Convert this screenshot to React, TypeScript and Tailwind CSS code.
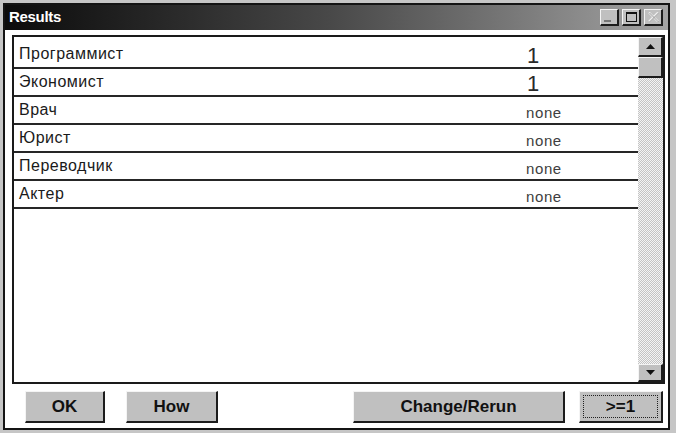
const ROWS = [
  { name: 'Программист', value: '1' },
  { name: 'Экономист', value: '1' },
  { name: 'Врач', value: 'none' },
  { name: 'Юрист', value: 'none' },
  { name: 'Переводчик', value: 'none' },
  { name: 'Актер', value: 'none' },
]

const bevel =
  'bg-[#c0c0c0] border-t border-l border-t-[#f4f4f4] border-l-[#f4f4f4] border-r-2 border-b-2 border-r-[#1c1c1c] border-b-[#1c1c1c]'

function TitleButton({ children }: { children: React.ReactNode }) {
  return (
    <div className={`${bevel} w-[19px] h-[17px] flex items-center justify-center`}>{children}</div>
  )
}

function ScrollButton({ up, h }: { up?: boolean; h: string }) {
  return (
    <div className={`${bevel} ${h} flex items-center justify-center`}>
      <svg width="9" height="5" viewBox="0 0 9 5">
        <path d={up ? 'M0 5 L4.5 0 L9 5 Z' : 'M0 0 L9 0 L4.5 5 Z'} fill="#111" />
      </svg>
    </div>
  )
}

export default function App() {
  return (
    <div
      className="w-[676px] h-[433px] bg-[#c6c6c6] pt-[3px] pl-[3px] pr-[6px] pb-[3px]"
      style={{ fontFamily: '"Liberation Sans", Arial, sans-serif' }}
    >
      <div className="h-full flex flex-col border-2 border-[#141414] bg-white">
        {/* title bar */}
        <div className="h-[25px] flex items-center pl-[4px] pr-[5px] bg-gradient-to-r from-[#0c0c0c] via-[#4a4a4a] to-[#a4a4a4]">
          <span className="text-white font-bold text-[15px] tracking-[-0.3px] flex-1">Results</span>
          <div className="flex gap-[3px]">
            <TitleButton>
              <div className="w-[7px] h-[2px] bg-[#777] mt-[8px] -ml-[4px]" />
            </TitleButton>
            <TitleButton>
              <div className="w-[11px] h-[10px] border border-[#111] border-t-2" />
            </TitleButton>
            <TitleButton>
              <svg width="11" height="10" viewBox="0 0 11 10">
                <path d="M1 0.5 L10 9.5 M10 0.5 L1 9.5" stroke="#f0f0f0" strokeWidth="2" />
                <path d="M1.5 1 L10.5 10 M10.5 1 L1.5 10" stroke="#9a9a9a" strokeWidth="1" />
              </svg>
            </TitleButton>
          </div>
        </div>

        {/* body */}
        <div className="flex-1 flex flex-col pt-[5px] pl-[7px] pr-[3px]">
          <div className="h-[349px] border-2 border-[#1a1a1a] flex">
            <div className="flex-1 pt-[4px]">
              {ROWS.map((r) => (
                <div key={r.name} className="h-[28px] border-b-2 border-[#262626] flex">
                  <div className="w-[512px] pl-[5px] flex items-center text-[16px] tracking-[0.5px] text-[#1a1a1a]">
                    {r.name}
                  </div>
                  {r.value === 'none' ? (
                    <div className="flex items-end pb-[1px] text-[15px] tracking-[0.6px] text-[#3e3e3e] leading-[18px]">
                      none
                    </div>
                  ) : (
                    <div className="flex items-end pl-[1px] text-[22px] leading-[22px] text-[#2a2a2a]">
                      1
                    </div>
                  )}
                </div>
              ))}
            </div>
            <div className="w-[25px] flex flex-col">
              <ScrollButton up h="h-[20px]" />
              <div className={`${bevel} h-[21px]`} />
              <div className="flex-1 bg-[repeating-conic-gradient(#c4c4c4_0_25%,#f4f4f4_0_50%)] bg-[length:2px_2px]" />
              <ScrollButton h="h-[18px]" />
            </div>
          </div>

          {/* buttons */}
          <div className="flex items-start pt-[7px] font-bold text-[17px] text-[#111]">
            <button className={`${bevel} ml-[13px] w-[80px] h-[32px]`}>OK</button>
            <button className={`${bevel} ml-[21px] w-[92px] h-[32px]`}>How</button>
            <button className={`${bevel} ml-[135px] w-[212px] h-[32px]`}>Change/Rerun</button>
            <button className={`${bevel} ml-[14px] w-[84px] h-[32px] p-[3px]`}>
              <span className="h-full w-full flex items-center justify-center border border-dotted border-[#222]">
                &gt;=1
              </span>
            </button>
          </div>
        </div>
      </div>
    </div>
  )
}
